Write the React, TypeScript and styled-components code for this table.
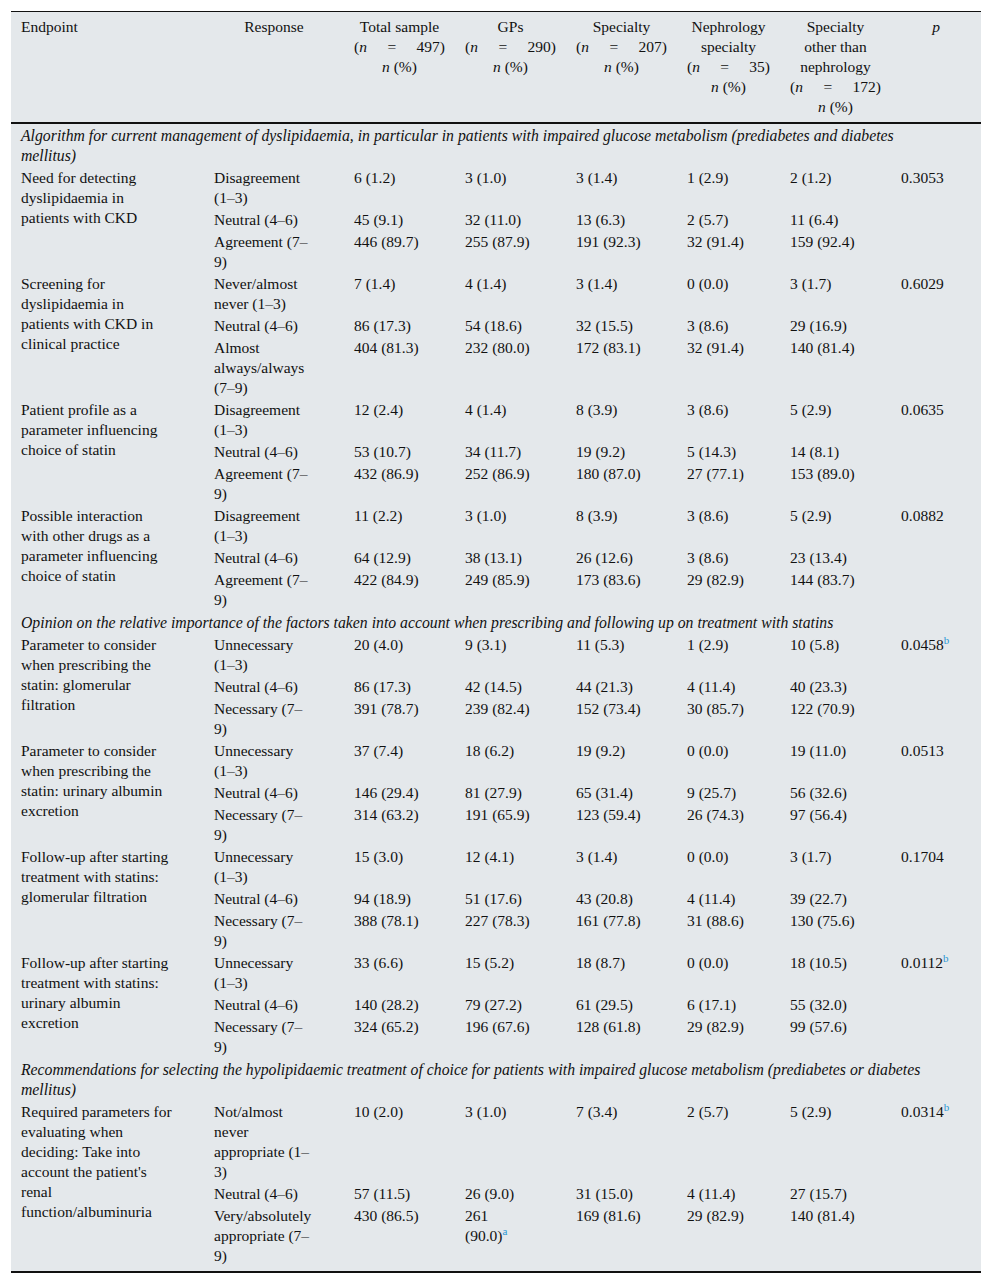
import React from "react";
import styled, { createGlobalStyle } from "styled-components";

const GlobalStyle = createGlobalStyle`
  html, body { margin: 0; padding: 0; background: #ffffff; }
  body { font-family: "Liberation Serif", "Times New Roman", serif; }
`;

const Page = styled.div`
  padding: 11px;
`;

const Table = styled.table`
  width: 970px;
  table-layout: fixed;
  border-collapse: collapse;
  background: #e4e8eb;
  color: #111111;
  font-family: "Liberation Serif", "Times New Roman", serif;
  font-size: 15.5px;
  line-height: 20px;
  border-top: 1px solid #111;
  border-bottom: 2px solid #111;
`;

const HeadRow = styled.tr`
  border-bottom: 2px solid #111;
`;

const Th = styled.th<{ $align?: "left" | "center" }>`
  font-weight: normal;
  text-align: ${(p) => p.$align ?? "center"};
  vertical-align: top;
  padding: 5px 10px 5px;
  white-space: nowrap;
`;

const Spread = styled.span`
  display: flex;
  justify-content: space-between;
`;

const Em = styled.i`
  font-style: italic;
`;

const SectionCell = styled.td`
  font-style: italic;
  font-size: 15.75px;
  padding: 2px 10px 1px;
  white-space: nowrap;
  vertical-align: top;
`;

const Td = styled.td<{ $last?: boolean }>`
  padding: 1px 10px ${(p) => (p.$last ? "5px" : "1px")};
  vertical-align: top;
  white-space: nowrap;
  text-align: left;
`;

const Sup = styled.sup`
  color: #2b97d4;
  font-size: 11px;
  line-height: 0;
  vertical-align: super;
`;

type Cell = string | string[];

const Lines: React.FC<{ value: Cell }> = ({ value }) => {
  const lines = Array.isArray(value) ? value : [value];
  return (
    <>
      {lines.map((line, i) => {
        const m = line.match(/^(.*)\^(\w)$/);
        return (
          <React.Fragment key={i}>
            {i > 0 && <br />}
            {m ? (
              <>
                {m[1]}
                <Sup>{m[2]}</Sup>
              </>
            ) : (
              line
            )}
          </React.Fragment>
        );
      })}
    </>
  );
};

type Row = { response: Cell; values: Cell[] };
type Group = { endpoint: string[]; p: string; rows: Row[] };
type Section = { title: string[]; groups: Group[] };

const D: Cell = ["Disagreement", "(1–3)"];
const N: Cell = "Neutral (4–6)";
const A: Cell = ["Agreement (7–", "9)"];
const U: Cell = ["Unnecessary", "(1–3)"];
const NE: Cell = ["Necessary (7–", "9)"];

const sections: Section[] = [
  {
    title: [
      "Algorithm for current management of dyslipidaemia, in particular in patients with impaired glucose metabolism (prediabetes and diabetes",
      "mellitus)",
    ],
    groups: [
      {
        endpoint: ["Need for detecting", "dyslipidaemia in", "patients with CKD"],
        p: "0.3053",
        rows: [
          { response: D, values: ["6 (1.2)", "3 (1.0)", "3 (1.4)", "1 (2.9)", "2 (1.2)"] },
          { response: N, values: ["45 (9.1)", "32 (11.0)", "13 (6.3)", "2 (5.7)", "11 (6.4)"] },
          { response: A, values: ["446 (89.7)", "255 (87.9)", "191 (92.3)", "32 (91.4)", "159 (92.4)"] },
        ],
      },
      {
        endpoint: ["Screening for", "dyslipidaemia in", "patients with CKD in", "clinical practice"],
        p: "0.6029",
        rows: [
          { response: ["Never/almost", "never (1–3)"], values: ["7 (1.4)", "4 (1.4)", "3 (1.4)", "0 (0.0)", "3 (1.7)"] },
          { response: N, values: ["86 (17.3)", "54 (18.6)", "32 (15.5)", "3 (8.6)", "29 (16.9)"] },
          { response: ["Almost", "always/always", "(7–9)"], values: ["404 (81.3)", "232 (80.0)", "172 (83.1)", "32 (91.4)", "140 (81.4)"] },
        ],
      },
      {
        endpoint: ["Patient profile as a", "parameter influencing", "choice of statin"],
        p: "0.0635",
        rows: [
          { response: D, values: ["12 (2.4)", "4 (1.4)", "8 (3.9)", "3 (8.6)", "5 (2.9)"] },
          { response: N, values: ["53 (10.7)", "34 (11.7)", "19 (9.2)", "5 (14.3)", "14 (8.1)"] },
          { response: A, values: ["432 (86.9)", "252 (86.9)", "180 (87.0)", "27 (77.1)", "153 (89.0)"] },
        ],
      },
      {
        endpoint: ["Possible interaction", "with other drugs as a", "parameter influencing", "choice of statin"],
        p: "0.0882",
        rows: [
          { response: D, values: ["11 (2.2)", "3 (1.0)", "8 (3.9)", "3 (8.6)", "5 (2.9)"] },
          { response: N, values: ["64 (12.9)", "38 (13.1)", "26 (12.6)", "3 (8.6)", "23 (13.4)"] },
          { response: A, values: ["422 (84.9)", "249 (85.9)", "173 (83.6)", "29 (82.9)", "144 (83.7)"] },
        ],
      },
    ],
  },
  {
    title: [
      "Opinion on the relative importance of the factors taken into account when prescribing and following up on treatment with statins",
    ],
    groups: [
      {
        endpoint: ["Parameter to consider", "when prescribing the", "statin: glomerular", "filtration"],
        p: "0.0458^b",
        rows: [
          { response: U, values: ["20 (4.0)", "9 (3.1)", "11 (5.3)", "1 (2.9)", "10 (5.8)"] },
          { response: N, values: ["86 (17.3)", "42 (14.5)", "44 (21.3)", "4 (11.4)", "40 (23.3)"] },
          { response: NE, values: ["391 (78.7)", "239 (82.4)", "152 (73.4)", "30 (85.7)", "122 (70.9)"] },
        ],
      },
      {
        endpoint: ["Parameter to consider", "when prescribing the", "statin: urinary albumin", "excretion"],
        p: "0.0513",
        rows: [
          { response: U, values: ["37 (7.4)", "18 (6.2)", "19 (9.2)", "0 (0.0)", "19 (11.0)"] },
          { response: N, values: ["146 (29.4)", "81 (27.9)", "65 (31.4)", "9 (25.7)", "56 (32.6)"] },
          { response: NE, values: ["314 (63.2)", "191 (65.9)", "123 (59.4)", "26 (74.3)", "97 (56.4)"] },
        ],
      },
      {
        endpoint: ["Follow-up after starting", "treatment with statins:", "glomerular filtration"],
        p: "0.1704",
        rows: [
          { response: U, values: ["15 (3.0)", "12 (4.1)", "3 (1.4)", "0 (0.0)", "3 (1.7)"] },
          { response: N, values: ["94 (18.9)", "51 (17.6)", "43 (20.8)", "4 (11.4)", "39 (22.7)"] },
          { response: NE, values: ["388 (78.1)", "227 (78.3)", "161 (77.8)", "31 (88.6)", "130 (75.6)"] },
        ],
      },
      {
        endpoint: ["Follow-up after starting", "treatment with statins:", "urinary albumin", "excretion"],
        p: "0.0112^b",
        rows: [
          { response: U, values: ["33 (6.6)", "15 (5.2)", "18 (8.7)", "0 (0.0)", "18 (10.5)"] },
          { response: N, values: ["140 (28.2)", "79 (27.2)", "61 (29.5)", "6 (17.1)", "55 (32.0)"] },
          { response: NE, values: ["324 (65.2)", "196 (67.6)", "128 (61.8)", "29 (82.9)", "99 (57.6)"] },
        ],
      },
    ],
  },
  {
    title: [
      "Recommendations for selecting the hypolipidaemic treatment of choice for patients with impaired glucose metabolism (prediabetes or diabetes",
      "mellitus)",
    ],
    groups: [
      {
        endpoint: [
          "Required parameters for",
          "evaluating when",
          "deciding: Take into",
          "account the patient's",
          "renal",
          "function/albuminuria",
        ],
        p: "0.0314^b",
        rows: [
          {
            response: ["Not/almost", "never", "appropriate (1–", "3)"],
            values: ["10 (2.0)", "3 (1.0)", "7 (3.4)", "2 (5.7)", "5 (2.9)"],
          },
          { response: N, values: ["57 (11.5)", "26 (9.0)", "31 (15.0)", "4 (11.4)", "27 (15.7)"] },
          {
            response: ["Very/absolutely", "appropriate (7–", "9)"],
            values: ["430 (86.5)", ["261", "(90.0)^a"], "169 (81.6)", "29 (82.9)", "140 (81.4)"],
          },
        ],
      },
    ],
  },
];

const widths = [193, 140, 111, 111, 111, 103, 111, 90];

const NCount: React.FC<{ n: string }> = ({ n }) => (
  <Spread>
    <span>
      (<Em>n</Em>
    </span>
    <span>=</span>
    <span>{n})</span>
  </Spread>
);

const Pct: React.FC = () => (
  <>
    <Em>n</Em> (%)
  </>
);

export default function App() {
  return (
    <Page>
      <GlobalStyle />
      <Table>
        <colgroup>
          {widths.map((w, i) => (
            <col key={i} style={{ width: w }} />
          ))}
        </colgroup>
        <thead>
          <HeadRow>
            <Th $align="left">Endpoint</Th>
            <Th>Response</Th>
            <Th>
              Total sample
              <NCount n="497" />
              <Pct />
            </Th>
            <Th>
              GPs
              <NCount n="290" />
              <Pct />
            </Th>
            <Th>
              Specialty
              <NCount n="207" />
              <Pct />
            </Th>
            <Th>
              Nephrology
              <br />
              specialty
              <NCount n="35" />
              <Pct />
            </Th>
            <Th>
              Specialty
              <br />
              other than
              <br />
              nephrology
              <NCount n="172" />
              <Pct />
            </Th>
            <Th>
              <Em>p</Em>
            </Th>
          </HeadRow>
        </thead>
        <tbody>
          {sections.map((s, si) => (
            <React.Fragment key={si}>
              <tr>
                <SectionCell colSpan={8}>
                  <Lines value={s.title} />
                </SectionCell>
              </tr>
              {s.groups.map((g, gi) =>
                g.rows.map((r, ri) => {
                  const isLast =
                    si === sections.length - 1 &&
                    gi === s.groups.length - 1 &&
                    ri === g.rows.length - 1;
                  return (
                    <tr key={`${si}-${gi}-${ri}`}>
                      {ri === 0 && (
                        <Td rowSpan={g.rows.length}>
                          <Lines value={g.endpoint} />
                        </Td>
                      )}
                      <Td $last={isLast}>
                        <Lines value={r.response} />
                      </Td>
                      {r.values.map((v, vi) => (
                        <Td key={vi} $last={isLast}>
                          <Lines value={v} />
                        </Td>
                      ))}
                      {ri === 0 && (
                        <Td rowSpan={g.rows.length}>
                          <Lines value={g.p} />
                        </Td>
                      )}
                    </tr>
                  );
                })
              )}
            </React.Fragment>
          ))}
        </tbody>
      </Table>
    </Page>
  );
}
